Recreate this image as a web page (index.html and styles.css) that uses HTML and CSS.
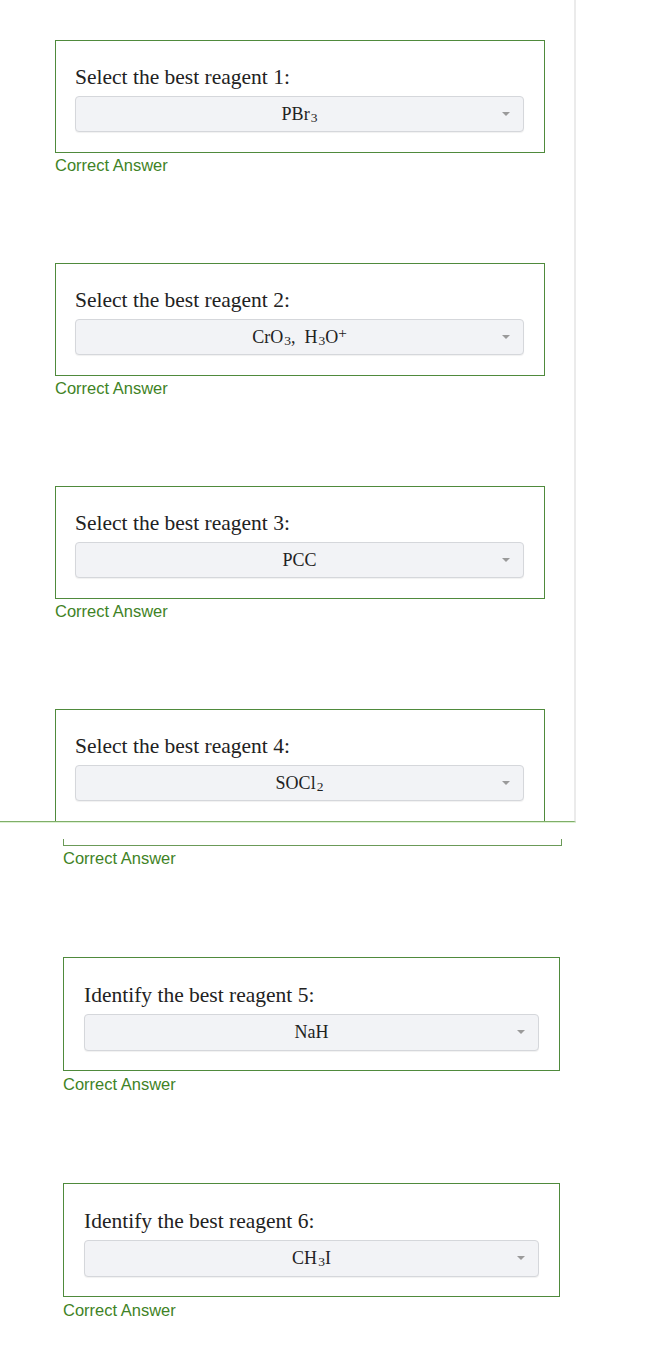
FILE: index.html
```html
<!DOCTYPE html>
<html lang="en">
<head>
    <meta charset="UTF-8">
    <title>Reagent Questions</title>
    <link rel="stylesheet" href="styles.css">
</head>
<body>
    <div class="upper-panel">
        <div class="question">
            <div class="q-box">
                <div class="q-label">Select the best reagent 1:</div>
                <div class="q-select">PBr<span class="sub">3</span><span class="arrow"></span></div>
            </div>
            <div class="q-result">Correct Answer</div>
        </div>
        <div class="question">
            <div class="q-box">
                <div class="q-label">Select the best reagent 2:</div>
                <div class="q-select">CrO<span class="sub">3</span>,&nbsp; H<span class="sub">3</span>O<span class="sup">+</span><span class="arrow"></span></div>
            </div>
            <div class="q-result">Correct Answer</div>
        </div>
        <div class="question">
            <div class="q-box">
                <div class="q-label">Select the best reagent 3:</div>
                <div class="q-select">PCC<span class="arrow"></span></div>
            </div>
            <div class="q-result">Correct Answer</div>
        </div>
        <div class="question">
            <div class="q-box">
                <div class="q-label">Select the best reagent 4:</div>
                <div class="q-select">SOCl<span class="sub">2</span><span class="arrow"></span></div>
            </div>
        </div>
    </div>

    <div class="lower-panel">
        <div class="bracket"></div>
        <div class="q-result">Correct Answer</div>
        <div class="question wide">
            <div class="q-box">
                <div class="q-label">Identify the best reagent 5:</div>
                <div class="q-select">NaH<span class="arrow"></span></div>
            </div>
            <div class="q-result">Correct Answer</div>
        </div>
        <div class="question wide">
            <div class="q-box">
                <div class="q-label">Identify the best reagent 6:</div>
                <div class="q-select">CH<span class="sub">3</span>I<span class="arrow"></span></div>
            </div>
            <div class="q-result">Correct Answer</div>
        </div>
    </div>
</body>
</html>
```

FILE: styles.css
```css
body { margin: 0; background: #fff; font-family: 'Liberation Serif', 'Times New Roman', serif; }

/* first screenshot part, clipped at the green rule */
.upper-panel {
    width: 576px;
    height: 822px;
    box-sizing: border-box;
    padding: 40px 0 0 55px;
    border-right: 2px solid #ebebeb;
    border-bottom: 1px solid #7fae69;
    box-shadow: 0 1px 0 #dcf1d2;
    overflow: hidden;
}
.question { width: 490px; margin-bottom: 89px; }
.q-box {
    border: 1px solid #4f8a3c;
    padding: 24px 20px 20px 19px;
}
.q-label {
    font-size: 21.5px;
    line-height: 24px;
    color: #222;
    margin-bottom: 7px;
}
.q-select {
    position: relative;
    height: 36px;
    box-sizing: border-box;
    background: #f2f3f6;
    border: 1px solid #d5d7db;
    border-radius: 4px;
    box-shadow: 0 1px 1px rgba(0,0,0,0.06);
    text-align: center;
    font-size: 18px;
    line-height: 34px;
    color: #222;
}
.sub { font-size: 0.75em; vertical-align: -2px; line-height: 0; margin-left: 1px; }
.sup { font-size: 0.85em; vertical-align: 5px; line-height: 0; }
.arrow {
    position: absolute;
    right: 13px;
    top: 15px;
    width: 0;
    height: 0;
    border-left: 4px solid transparent;
    border-right: 4px solid transparent;
    border-top: 4px solid #9a9a9a;
}
.q-result {
    font-family: 'Liberation Sans', Arial, sans-serif;
    font-size: 16.5px;
    line-height: 18px;
    color: #3f8326;
    margin-top: 3px;
}

/* second screenshot part */
.lower-panel { padding-left: 63px; }
.bracket {
    width: 497px;
    height: 6px;
    margin-top: 17px;
    border: 1px solid #6b9a58;
    border-top: none;
}
.lower-panel > .q-result { margin-top: 3px; margin-bottom: 90px; }
.question.wide { width: 497px; margin-bottom: 90px; }
.wide .q-box { padding: 25px 20px 19px 20px; }
.wide .q-select { height: 37px; line-height: 35px; }
.wide .q-result { margin-top: 4px; }
```
